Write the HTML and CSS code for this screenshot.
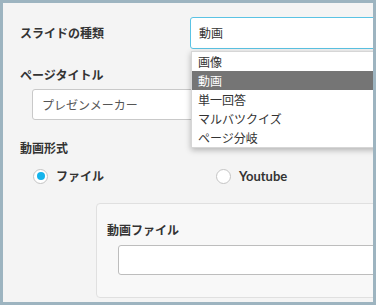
FILE: index.html
```html
<!DOCTYPE html>
<html lang="ja">
<head>
<meta charset="utf-8">
<link rel="stylesheet" href="styles.css">
</head>
<body>
<div class="frame">
  <div class="content">
    <div class="row-inline">
      <div class="label label-fixed">スライドの種類</div>
      <div class="select-wrap">
        <div class="select">動画</div>
        <ul class="dropdown">
          <li>画像</li>
          <li class="active">動画</li>
          <li>単一回答</li>
          <li>マルバツクイズ</li>
          <li>ページ分岐</li>
        </ul>
      </div>
    </div>

    <div class="label label-title">ページタイトル</div>
    <div class="input input-title">プレゼンメーカー</div>

    <div class="label label-format">動画形式</div>
    <div class="radios">
      <div class="radio-item">
        <span class="radio checked"></span><span class="radio-text">ファイル</span>
      </div>
      <div class="radio-item">
        <span class="radio"></span><span class="radio-text latin">Youtube</span>
      </div>
    </div>

    <div class="box">
      <div class="label">動画ファイル</div>
      <div class="input input-file"></div>
    </div>
  </div>
</div>
</body>
</html>
```

FILE: styles.css
```css
* { box-sizing: border-box; }
html, body { margin: 0; padding: 0; background: #fff; }
body {
  font-family: "Noto Sans CJK JP", "Lato", sans-serif;
  font-size: 12px;
  color: #333;
}
.frame {
  width: 376px;
  height: 305px;
  border: 3px solid #9db4c0;
  background: #f4f4f4;
  overflow: hidden;
  position: relative;
}
.content {
  width: 440px;
  padding: 14px 0 0 17px;
}
.label {
  font-weight: bold;
  font-size: 12px;
  line-height: 16px;
  color: #333;
}
.row-inline {
  display: flex;
  align-items: center;
}
.label-fixed { width: 170px; }
.select-wrap {
  position: relative;
  flex: 1;
}
.select {
  height: 32px;
  border: 1px solid #5bc3e4;
  border-radius: 3px;
  background: #fff;
  padding: 0 8px;
  line-height: 30px;
  color: #333;
}
.dropdown {
  position: absolute;
  left: 1px;
  top: 34px;
  width: 260px;
  margin: 0;
  padding: 0;
  list-style: none;
  background: #fff;
  border: 1px solid #d6d6d6;
  box-shadow: 0 2px 6px rgba(0,0,0,0.28);
  z-index: 5;
}
.dropdown li {
  height: 19px;
  line-height: 19px;
  padding-left: 6px;
  color: #333;
}
.dropdown li.active {
  background: #757575;
  color: #fff;
}
.label-title { margin-top: 18px; }
.input {
  background: #fff;
  border: 1px solid #c9c9c9;
  border-radius: 3px;
  color: #555;
}
.input-title {
  margin: 6px 0 0 12px;
  height: 31px;
  line-height: 29px;
  padding-left: 9px;
}
.label-format { margin-top: 20px; }
.radios {
  display: flex;
  margin: 12px 0 0 13px;
}
.radio-item {
  display: flex;
  align-items: center;
  height: 16px;
}
.radio-item:first-child { width: 183px; }
.radio {
  width: 15px;
  height: 15px;
  border-radius: 50%;
  border: 1px solid #c4c4c4;
  background: #fff;
  display: flex;
  align-items: center;
  justify-content: center;
  margin-right: 8px;
}
.radio.checked::after {
  content: "";
  width: 8px;
  height: 8px;
  border-radius: 50%;
  background: #14b4ec;
}
.radio-text {
  font-weight: bold;
  font-size: 12px;
  line-height: 16px;
}
.latin {
  font-family: "Lato", "Noto Sans CJK JP", sans-serif;
  font-size: 13px;
}
.box {
  margin: 19px 0 0 76px;
  height: 95px;
  border: 1px solid #e0e0e0;
  border-radius: 4px;
  background: #f8f8f8;
  padding: 18px 0 0 10px;
}
.input-file {
  margin: 7px 0 0 11px;
  height: 30px;
  border-color: #bdbdbd;
}
```
